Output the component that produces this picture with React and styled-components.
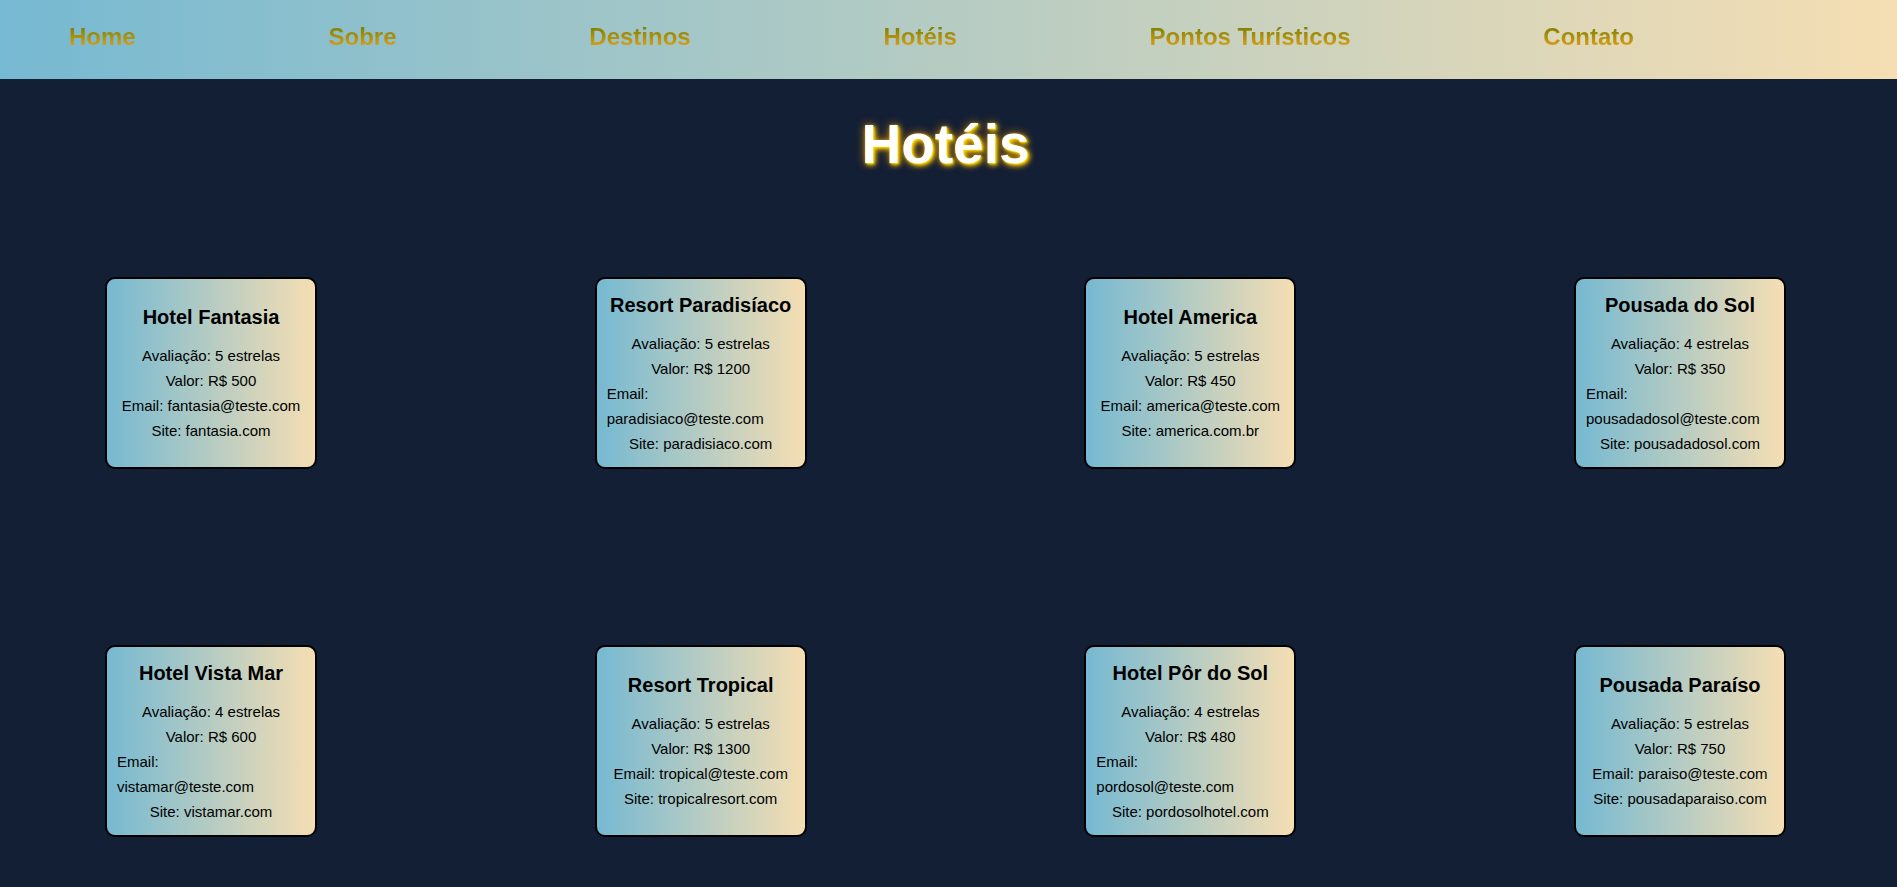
import React from "react";
import styled, { createGlobalStyle } from "styled-components";

const GlobalStyle = createGlobalStyle`
  * { box-sizing: border-box; margin: 0; padding: 0; }
  body {
    background: #131f35;
    color: #000;
    font-family: Arial, "Liberation Sans", sans-serif;
  }
`;

const Header = styled.header`
  background: linear-gradient(to right, #76b9d2, #f5deb3);
`;

const NavList = styled.ul`
  display: flex;
  align-items: center;
  justify-content: space-between;
  min-height: 79px;
  padding: 0 263px 6px 69px;
  list-style: none;
`;

const NavLink = styled.a`
  display: block;
  font-size: 24px;
  font-weight: bold;
  line-height: 28px;
  white-space: nowrap;
  text-decoration: none;
  color: transparent;
  background: linear-gradient(to bottom, #808000 15%, #daa01c 85%);
  background-clip: text;
  -webkit-background-clip: text;
`;

const Main = styled.main`
  padding: 34px 6px 50px 0;
`;

const PageTitle = styled.h1`
  color: #fff;
  font-size: 55px;
  line-height: 62px;
  text-align: center;
  text-shadow: 1px 1px 2px #ffd700, 2px 2px 5px #ffd700, 0 0 10px #c8780b;
`;

const HotelGrid = styled.section`
  display: grid;
  grid-template-columns: repeat(4, 212px);
  justify-content: space-between;
  row-gap: 176px;
  padding: 102px 105px 0;
`;

const Card = styled.article`
  display: flex;
  flex-direction: column;
  align-items: center;
  justify-content: center;
  min-height: 192px;
  padding: 9px 10px 11px;
  border: 2px solid #000;
  border-radius: 10px;
  background: linear-gradient(to right, #76b9d2, #f5deb3);
`;

const HotelName = styled.h2`
  margin-bottom: 10px;
  font-size: 20px;
  line-height: 32px;
  white-space: nowrap;
`;

const Details = styled.ul`
  display: flex;
  flex-direction: column;
  align-items: center;
  width: 100%;
  list-style: none;
`;

const Detail = styled.li`
  width: ${(p) => (p.$stacked ? "100%" : "auto")};
  font-size: 15px;
  line-height: 25px;
`;

const Address = styled.span`
  display: ${(p) => (p.$stacked ? "block" : "inline")};
`;

const links = ["Home", "Sobre", "Destinos", "Hotéis", "Pontos Turísticos", "Contato"];

const hotels = [
  { name: "Hotel Fantasia", stars: 5, price: 500, email: "fantasia@teste.com", site: "fantasia.com" },
  { name: "Resort Paradisíaco", stars: 5, price: 1200, email: "paradisiaco@teste.com", site: "paradisiaco.com", stacked: true },
  { name: "Hotel America", stars: 5, price: 450, email: "america@teste.com", site: "america.com.br" },
  { name: "Pousada do Sol", stars: 4, price: 350, email: "pousadadosol@teste.com", site: "pousadadosol.com", stacked: true },
  { name: "Hotel Vista Mar", stars: 4, price: 600, email: "vistamar@teste.com", site: "vistamar.com", stacked: true },
  { name: "Resort Tropical", stars: 5, price: 1300, email: "tropical@teste.com", site: "tropicalresort.com" },
  { name: "Hotel Pôr do Sol", stars: 4, price: 480, email: "pordosol@teste.com", site: "pordosolhotel.com", stacked: true },
  { name: "Pousada Paraíso", stars: 5, price: 750, email: "paraiso@teste.com", site: "pousadaparaiso.com" },
];

function HotelCard({ hotel }) {
  return (
    <Card>
      <HotelName>{hotel.name}</HotelName>
      <Details>
        <Detail>Avaliação: {hotel.stars} estrelas</Detail>
        <Detail>Valor: R$ {hotel.price}</Detail>
        <Detail $stacked={hotel.stacked}>
          Email: <Address $stacked={hotel.stacked}>{hotel.email}</Address>
        </Detail>
        <Detail>Site: {hotel.site}</Detail>
      </Details>
    </Card>
  );
}

export default function App() {
  return (
    <>
      <GlobalStyle />
      <Header>
        <nav>
          <NavList>
            {links.map((label) => (
              <li key={label}>
                <NavLink href="#">{label}</NavLink>
              </li>
            ))}
          </NavList>
        </nav>
      </Header>
      <Main>
        <PageTitle>Hotéis</PageTitle>
        <HotelGrid>
          {hotels.map((hotel) => (
            <HotelCard key={hotel.name} hotel={hotel} />
          ))}
        </HotelGrid>
      </Main>
    </>
  );
}
